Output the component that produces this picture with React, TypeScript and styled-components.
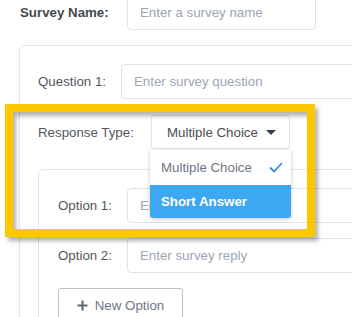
import React from 'react';
import styled, { createGlobalStyle } from 'styled-components';

const GlobalStyle = createGlobalStyle`
  html, body {
    margin: 0;
    padding: 0;
    background: #ffffff;
    overflow: hidden;
  }
  body {
    font-family: "Liberation Sans", Arial, sans-serif;
    font-size: 13.3px;
    color: #4d5157;
  }
`;

const Page = styled.div`
  position: relative;
  width: 352px;
  height: 317px;
  overflow: hidden;
  padding-left: 19px;
  box-sizing: border-box;
`;

const Row = styled.div<{ $top?: number }>`
  display: flex;
  align-items: center;
  margin-top: ${p => p.$top ?? 0}px;
`;

const Label = styled.span<{ $w: number; $bold?: boolean; $indent?: number }>`
  flex: none;
  width: ${p => p.$w}px;
  padding-left: ${p => p.$indent ?? 0}px;
  box-sizing: border-box;
  font-weight: ${p => (p.$bold ? 700 : 400)};
  color: ${p => (p.$bold ? '#45494f' : '#53575d')};
  white-space: nowrap;
`;

const Input = styled.div<{ $w?: number }>`
  flex: none;
  width: ${p => (p.$w ? `${p.$w}px` : '400px')};
  height: 35px;
  box-sizing: border-box;
  border: 1px solid #dfe3e8;
  border-radius: 4px;
  padding-left: 12px;
  display: flex;
  align-items: center;
  color: #9ba6b2;
  white-space: nowrap;
`;

const Card = styled.div<{ $pt: number; $pl: number }>`
  border: 1px solid #e2e6ea;
  border-radius: 5px;
  width: 500px;
  padding: ${p => p.$pt}px 0 40px ${p => p.$pl}px;
  box-sizing: border-box;
`;

const SelectWrap = styled.div`
  position: relative;
  flex: none;
`;

const SelectButton = styled.div`
  width: 139px;
  height: 34px;
  box-sizing: border-box;
  border: 1px solid #dfe3e8;
  border-radius: 3px;
  display: flex;
  align-items: center;
  justify-content: space-between;
  padding: 0 13px 0 15px;
  color: #484c52;
  white-space: nowrap;
`;

const Caret = styled.span`
  width: 0;
  height: 0;
  border-left: 5px solid transparent;
  border-right: 5px solid transparent;
  border-top: 5px solid #3c4046;
  margin-top: 1px;
`;

const Menu = styled.div`
  position: absolute;
  z-index: 2;
  top: 35px;
  left: -1px;
  width: 141px;
  background: #ffffff;
  border-radius: 3px;
  box-shadow: 0 1px 4px rgba(0, 0, 0, 0.22);
  overflow: hidden;
`;

const MenuItem = styled.div<{ $active?: boolean; $h: number }>`
  height: ${p => p.$h}px;
  display: flex;
  align-items: center;
  justify-content: space-between;
  padding: 0 8px 0 11px;
  background: ${p => (p.$active ? '#3da8f1' : '#ffffff')};
  color: ${p => (p.$active ? '#ffffff' : '#6c7784')};
  font-weight: ${p => (p.$active ? 700 : 400)};
  white-space: nowrap;
`;

const AddButton = styled.div`
  width: 125px;
  height: 35px;
  box-sizing: border-box;
  border: 1px solid #b9c1ca;
  border-radius: 3px;
  display: flex;
  align-items: center;
  justify-content: center;
  gap: 7px;
  color: #6c7784;
  white-space: nowrap;
`;

const Highlight = styled.div`
  position: absolute;
  z-index: 3;
  left: 5px;
  top: 104px;
  width: 310px;
  height: 133px;
  box-sizing: border-box;
  border: 8px solid #fec800;
  pointer-events: none;
  filter: drop-shadow(3px 4px 2px rgba(0, 0, 0, 0.3));
`;

const Check = () => (
  <svg width="14" height="11" viewBox="0 0 14 11">
    <path d="M1 5.5 L5 9.5 L13 1" fill="none" stroke="#3b8fdc" strokeWidth="1.8" />
  </svg>
);

const Plus = () => (
  <svg width="11" height="11" viewBox="0 0 11 11">
    <path d="M5.5 0.5 V10.5 M0.5 5.5 H10.5" stroke="#5d6873" strokeWidth="2" />
  </svg>
);

const App = () => {
  return (
    <Page>
      <GlobalStyle />
      <Row $top={-5}>
        <Label $w={108} $indent={1} $bold>Survey Name:</Label>
        <Input $w={189}>Enter a survey name</Input>
      </Row>
      <Row $top={15}>
        <Card $pt={18} $pl={18}>
          <Row>
            <Label $w={83}>Question 1:</Label>
            <Input>Enter survey question</Input>
          </Row>
          <Row $top={16}>
            <Label $w={113}>Response Type:</Label>
            <SelectWrap>
              <SelectButton>
                Multiple Choice
                <Caret />
              </SelectButton>
              <Menu>
                <MenuItem $h={35}>
                  Multiple Choice
                  <Check />
                </MenuItem>
                <MenuItem $h={33} $active>Short Answer</MenuItem>
              </Menu>
            </SelectWrap>
          </Row>
          <Row $top={20}>
            <Card $pt={18} $pl={19}>
              <Row>
                <Label $w={69}>Option 1:</Label>
                <Input>Enter survey reply</Input>
              </Row>
              <Row $top={15}>
                <Label $w={69}>Option 2:</Label>
                <Input>Enter survey reply</Input>
              </Row>
              <Row $top={15}>
                <AddButton>
                  <Plus />
                  New Option
                </AddButton>
              </Row>
            </Card>
          </Row>
        </Card>
      </Row>
      <Highlight />
    </Page>
  );
};

export default App;
